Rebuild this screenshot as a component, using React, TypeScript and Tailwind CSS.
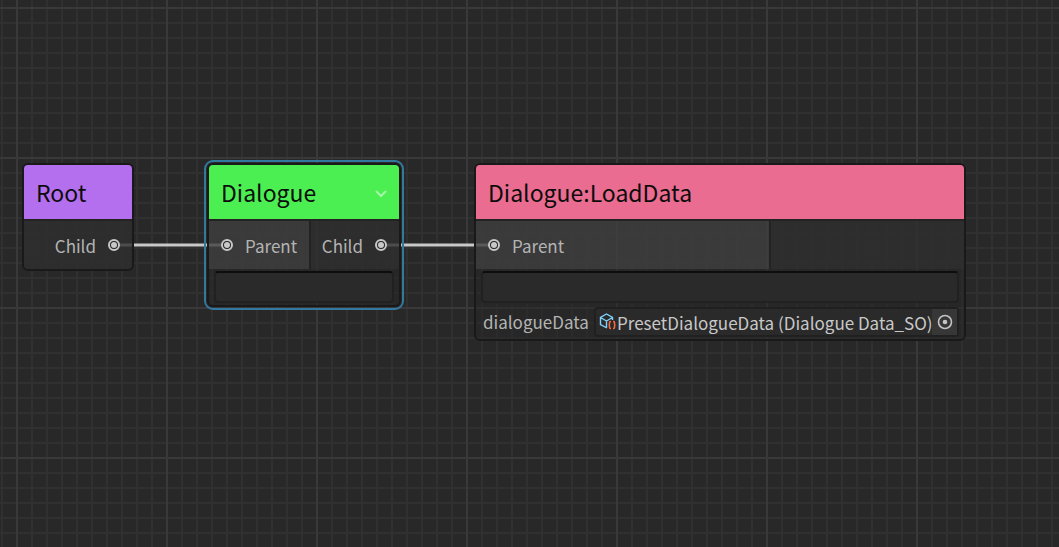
import type { ReactNode } from "react";

function Grid() {
  return (
    <svg className="absolute inset-0 h-full w-full" aria-hidden="true">
      <defs>
        <pattern id="minor" x="1" y="7" width="15" height="15" patternUnits="userSpaceOnUse">
          <path d="M0 0h15v2H2v13H0z" fill="#303030" />
        </pattern>
        <pattern id="major" x="16" y="7" width="150" height="150" patternUnits="userSpaceOnUse">
          <path d="M0 0h150v2H2v148H0z" fill="#393939" />
        </pattern>
      </defs>
      <rect width="100%" height="100%" fill="url(#minor)" />
      <rect width="100%" height="100%" fill="url(#major)" />
    </svg>
  );
}

function Edges() {
  return (
    <svg className="absolute inset-0 h-full w-full" aria-hidden="true" stroke="#c8c8c8" strokeWidth="3">
      <path d="M114 245H227" />
      <path d="M381 245H494" />
    </svg>
  );
}

function PortDot() {
  return (
    <svg className="size-3 shrink-0" viewBox="0 0 12 12" aria-hidden="true">
      <circle cx="6" cy="6" r="5" fill="#232323" stroke="#c8c8c8" strokeWidth="2" />
      <circle cx="6" cy="6" r="3" fill="#c8c8c8" />
    </svg>
  );
}

function InPort({ className }: { className: string }) {
  return (
    <div className={`flex items-center gap-3 bg-[#3f3f3f]/80 pl-3 ${className}`}>
      <PortDot />
      <span className="pt-0.5">Parent</span>
    </div>
  );
}

function OutPort({ className }: { className: string }) {
  return (
    <div className={`flex items-center justify-end gap-3 bg-[#2e2e2e]/80 pr-3 ${className}`}>
      <span className="pt-0.5">Child</span>
      <PortDot />
    </div>
  );
}

function Node({ title, color, place, action, ports, children }: {
  title: string;
  color: string;
  place: string;
  action?: ReactNode;
  ports: ReactNode;
  children?: ReactNode;
}) {
  return (
    <section className={`absolute top-[163px] rounded-md border-2 border-[#191919] ${place}`}>
      <header className={`flex h-[54px] items-center justify-between rounded-t px-3 ${color}`}>
        <h2 className="text-[23px] leading-8 text-[#0c0c0c]">{title}</h2>
        {action}
      </header>
      <div className="flex h-[50px] border-t-2 border-[#232323]">{ports}</div>
      {children}
    </section>
  );
}

function NoteField({ label }: { label: string }) {
  return (
    <input
      aria-label={label}
      className="block h-8 w-full rounded border-2 border-[#212121] border-t-[#0d0d0d] bg-[#2a2a2a] px-2 outline-none"
    />
  );
}

function DataIcon() {
  return (
    <svg className="size-[18px] shrink-0" viewBox="0 0 18 18" fill="none" aria-hidden="true">
      <path d="M8 15 1.5 11.5V4.500L7.500 1 13.500 4.500V7M1.500 4.500 7.500 8 13.500 4.500M7.500 8V14.500" stroke="#7fd3fb" strokeWidth="1.400" />
      <path d="M12 8.500h-.5q-1 0-1 1v1.500q0 1-1 1 1 0 1 1v1.500q0 1 1 1h.5M14 8.500h.5q1 0 1 1v1.500q0 1 1 1-1 0-1 1v1.500q0 1-1 1H14" stroke="#ff6b3d" strokeWidth="1.500" />
    </svg>
  );
}

export default function App() {
  return (
    <main className="relative min-h-screen overflow-hidden bg-[#282828] font-['Noto_Sans_CJK_SC',sans-serif] text-[17px] leading-6 text-[#b4b4b4]">
      <Grid />
      <Edges />

      <Node title="Root" color="bg-[#b46fee]" place="left-[22px] w-28" ports={<OutPort className="flex-1 rounded-b" />} />

      <Node
        title="Dialogue"
        color="bg-[#4bef52]"
        place="left-[207px] w-[194px] outline-2 outline-offset-1 outline-[#32789f]"
        action={
          <button type="button" aria-label="Collapse node" className="text-[#a5f7a8]">
            <svg className="size-3" viewBox="0 0 12 12" fill="none" stroke="currentColor" strokeWidth="2" aria-hidden="true">
              <path d="M1 5 6 10 11 5" />
            </svg>
          </button>
        }
        ports={
          <>
            <InPort className="w-[100px]" />
            <OutPort className="flex-1 border-l-2 border-[#232323]" />
          </>
        }
      >
        <div className="rounded-b bg-[#252525]/50 px-[5px] py-0.5">
          <NoteField label="Dialogue note" />
        </div>
      </Node>

      <Node
        title="Dialogue:LoadData"
        color="bg-[#ea6c90]"
        place="left-[474px] w-[492px]"
        ports={
          <>
            <InPort className="w-3/5" />
            <div className="flex-1 border-l-2 border-[#232323] bg-[#2e2e2e]/80" />
          </>
        }
      >
        <div className="rounded-b bg-[#252525]/50 px-[5px] py-0.5">
          <NoteField label="Load data note" />
          <div className="mt-1 flex items-center justify-between pl-0.5">
            <span id="data-label">dialogueData</span>
            <div
              role="group"
              aria-labelledby="data-label"
              className="flex h-[30px] w-[365px] shrink-0 items-center rounded border-2 border-[#202020] bg-[#2a2a2a] pl-[3px] text-[#c8c8c8]"
            >
              <DataIcon />
              <span className="min-w-0 flex-1 pt-0.5 whitespace-nowrap">PresetDialogueData (Dialogue Data_SO)</span>
              <button type="button" aria-label="Select object" className="flex h-full w-[25px] shrink-0 items-center justify-center bg-[#373737]">
                <svg className="size-4" viewBox="0 0 16 16" aria-hidden="true">
                  <circle cx="8" cy="8" r="6.500" fill="none" stroke="#c4c4c4" strokeWidth="1.600" />
                  <circle cx="8" cy="8" r="2.300" fill="#c4c4c4" />
                </svg>
              </button>
            </div>
          </div>
        </div>
      </Node>
    </main>
  );
}
